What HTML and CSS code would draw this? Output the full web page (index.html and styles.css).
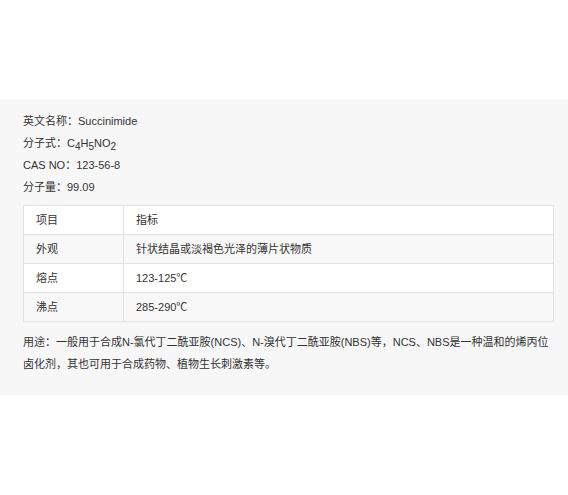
FILE: index.html
```html
<!DOCTYPE html>
<html lang="zh-CN">
<head>
<meta charset="utf-8">
<title>Succinimide</title>
<link rel="stylesheet" href="styles.css">
</head>
<body>
<div class="top"></div>
<section class="panel">
  <p class="line">英文名称：Succinimide</p>
  <p class="line">分子式：C<sub>4</sub>H<sub>5</sub>NO<sub>2</sub></p>
  <p class="line">CAS NO：123-56-8</p>
  <p class="line">分子量：99.09</p>
  <table class="spec">
    <tr><td class="c1">项目</td><td>指标</td></tr>
    <tr class="alt"><td class="c1">外观</td><td>针状结晶或淡褐色光泽的薄片状物质</td></tr>
    <tr><td class="c1">熔点</td><td>123-125℃</td></tr>
    <tr class="alt"><td class="c1">沸点</td><td>285-290℃</td></tr>
  </table>
  <p class="use">用途：一般用于合成N-氯代丁二酰亚胺(NCS)、N-溴代丁二酰亚胺(NBS)等，NCS、NBS是一种温和的烯丙位卤化剂，其也可用于合成药物、植物生长刺激素等。</p>
</section>
</body>
</html>
```
FILE: styles.css
```css
html, body {
  margin: 0;
  padding: 0;
  background: #ffffff;
}
body {
  font-family: "Liberation Sans", Arial, "Noto Sans CJK SC", sans-serif;
  font-size: 11px;
  color: #333333;
}
.top {
  height: 99px;
}
.panel {
  background: #f7f7f7;
  padding: 11px 14px 21px 23px;
  height: 264px;
}
.line {
  margin: 0;
  line-height: 22px;
}
.line sub {
  font-size: 10px;
  line-height: 0;
  vertical-align: -3px;
}
.spec {
  margin-top: 7px;
  width: 100%;
  border-collapse: collapse;
  background: #ffffff;
}
.spec td {
  border: 1px solid #e2e2e2;
  height: 29px;
  padding: 0 12px;
  line-height: 16px;
  box-sizing: border-box;
}
.spec td.c1 {
  width: 100px;
}
.spec tr.alt td {
  background: #f8f8f8;
}
.use {
  margin: 9px 0 0 0;
  line-height: 22px;
}
```
